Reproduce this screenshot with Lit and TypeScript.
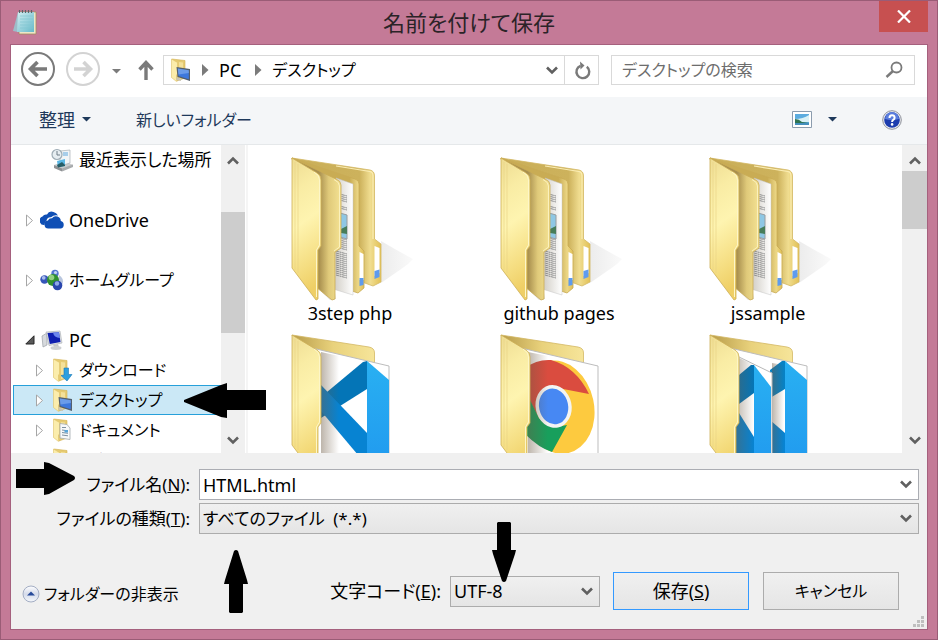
import { LitElement, html, css, svg } from "lit";
import { customElement, property } from "lit/decorators.js";
import { classMap } from "lit/directives/class-map.js";
import { styleMap } from "lit/directives/style-map.js";

const textFont = css`"Noto Sans", "Noto Sans CJK JP", sans-serif`;

/* ---------- small icons ---------- */

const chevron = (up = false) => html`<svg width="12" height="9" viewBox="0 0 12 9" aria-hidden="true">
  <path d=${up ? "M1 7.5 L6 2.5 L11 7.5" : "M1 1.5 L6 6.5 L11 1.5"} fill="none" stroke="#606060" stroke-width="2.6" />
</svg>`;

const caret = (color: string) => html`<svg width="9" height="5" viewBox="0 0 9 5" aria-hidden="true">
  <path d="M0 0H9L4.500 4.500Z" fill=${color} />
</svg>`;

const crumbArrow = html`<svg width="7" height="12" viewBox="0 0 7 12" aria-hidden="true">
  <path d="M0 0L6.500 6L0 12Z" fill="#7b7b7b" />
</svg>`;

const smallFolder = svg`
  <path d="M4 1L17 2.500V20L9 23Z" fill="#e6cb72" stroke="#d3b252" stroke-width=".6" />
  <path d="M11 4L15 4.500V20L11 21Z" fill="#f4e19a" />
  <path d="M3.500 1L9.500 4.500V16L8.500 17V23.500L3.500 19.500Z" fill="#fbedac" stroke="#dfc268" stroke-width=".6" />`;

const monitor = svg`
  <path d="M8.500 9L22 11V23L9.500 19Z" fill="#55606d" />
  <path d="M9.800 10.500L20.800 12.200V21.300L10.500 18Z" fill="#3d78dd" />
  <path d="M9.800 10.500L20.800 12.200V15L10.500 16.500Z" fill="#8ab4f2" opacity=".6" />
  <path d="M8.500 19L13 21V23L8.500 22Z" fill="#c9c4b4" />`;

const icons: Record<string, unknown> = {
  recent: svg`
    <path d="M4 17L15 13L23 17L12 23Z" fill="#c9cbcd" /><path d="M4 17L12 20.500V23.500L4 20Z" fill="#8e9194" />
    <path d="M12 20.500L23 16.500V19L12 23.500Z" fill="#a8abad" />
    <path d="M10 3L20 2V15L10 18Z" fill="#f2f5f7" stroke="#a9b0b5" stroke-width=".7" />
    <path d="M13 5H18M13 7H18" stroke="#5fa7dd" stroke-width="1.200" />
    <path d="M7 13L15 11V18L8 19Z" fill="#5ab7e4" /><path d="M7 17L12 14L15 17V18L8 19.500Z" fill="#275d66" />
    <circle cx="7" cy="6.500" r="5" fill="#e6edf1" stroke="#9eacb5" stroke-width="1.200" />
    <path d="M7 3V7H10" fill="none" stroke="#6f7d87" />`,
  cloud: svg`
    <path d="M4.500 17A4.400 4.400 0 0 1 2.500 8.500Q4 6 7 6.500Q9 2.500 13.500 4Q16.500 4.500 18 7.500Q14 6.500 11 9.300Q7 9 6.500 12.800Q4.500 14 4.500 17Z" fill="#0f4fb5" />
    <path d="M9 20.500A4 4 0 0 1 8 12.500Q9 10 12 10.300Q14 7.300 17.500 8.500Q20.800 9.500 20.800 13A3.900 3.900 0 0 1 21 20.500Z" fill="#0f4fb5" />`,
  homegroup: svg`
    <circle cx="15" cy="5.500" r="3.700" fill="#5375cf" /><circle cx="15.500" cy="4.500" r="1.600" fill="#c5d5f6" />
    <circle cx="4.500" cy="11.500" r="4.200" fill="#3656b9" /><circle cx="3.700" cy="9.800" r="1.900" fill="#a9bcec" />
    <path d="M19 7Q25 11 22 17L18 15Z" fill="#b9c6de" />
    <circle cx="13" cy="12" r="6" fill="#31902f" /><circle cx="11.500" cy="9.500" r="2.800" fill="#93d080" />
    <circle cx="17.500" cy="17.500" r="4.800" fill="#2946ad" /><circle cx="17" cy="15.500" r="2.200" fill="#8fa8e8" />`,
  pc: svg`
    <path d="M2 8L7 5V17L3 19Z" fill="#d7dadd" stroke="#9ba0a6" stroke-width=".7" />
    <path d="M6 4L20 3L22 15L9 17.500Z" fill="#dfe2e5" stroke="#a4a9ae" stroke-width=".6" />
    <path d="M7.500 5L19 4.200L20.500 14L9.800 16Z" fill="#0f1fb0" /><path d="M13 4.600L19 4.200L20 10Q14 10 13 4.600Z" fill="#6c87ee" />
    <path d="M13 17L18 16L19 19L15 20Z" fill="#c3c7ca" /><ellipse cx="16" cy="20" rx="5.500" ry="1.900" fill="#cdd0d3" />`,
  downloads: svg`${smallFolder}<path d="M14 10H18.500V16.500H22L17 23L11 17.500L14 17Z" fill="#2b9fe0" stroke="#1877b5" stroke-width=".6" />`,
  desktop: svg`${smallFolder}${monitor}`,
  documents: svg`${smallFolder}
    <path d="M10 5.500L17 6.500L20 10V21.500L10 20Z" fill="#f6f8fa" stroke="#a3a9ae" stroke-width=".8" />
    <path d="M12 9.500H16M12 12L18 12.800M12 14.500L18 15.300M12 17L18 17.800" stroke="#6f8396" stroke-width=".9" />
    <path d="M14.500 12H18V14.500H14.500Z" fill="#56a5da" />`,
  pictures: svg`${smallFolder}<path d="M9 12L20 10V20L9 19Z" fill="#6db4e2" />`,
};

const icon = (name: string) => html`<svg class="icon" width="24" height="24" viewBox="0 0 24 24" aria-hidden="true">${icons[name]}</svg>`;

/* ---------- scroll bar ---------- */

@customElement("scroll-rail")
class ScrollRail extends LitElement {
  @property({ type: Number }) before = 0;
  @property({ type: Number }) size = 1;
  @property({ type: Number }) after = 0;

  static styles = css`
    :host { display: flex; flex-direction: column; width: 24px; background: #f0f0f0; }
    button { height: 26px; padding: 4px 0 0; border: 0; background: none; display: grid; place-items: center; }
    button:last-child { padding: 0; }
    .track { flex: 1; display: flex; flex-direction: column; }
    .thumb { background: #cdcdcd; }
  `;

  render() {
    return html`
      <button aria-label="上へスクロール">${chevron(true)}</button>
      <div class="track">
        <div style=${styleMap({ flexGrow: String(this.before) })}></div>
        <div class="thumb" style=${styleMap({ flexGrow: String(this.size) })}></div>
        <div style=${styleMap({ flexGrow: String(this.after) })}></div>
      </div>
      <button aria-label="下へスクロール">${chevron()}</button>`;
  }
}

/* ---------- folder thumbnails ---------- */

type Kind = "docs" | "code" | "chrome" | "codes";

@customElement("folder-art")
class FolderArt extends LitElement {
  @property() kind: Kind = "docs";

  static styles = css`
    :host, svg { display: block; }
  `;

  private docs() {
    const lines = [];
    for (let y = 38; y < 122; y += 2) {
      if ((y > 44 && y < 50) || (y > 53 && y < 82) || (y > 92 && y < 96)) continue;
      lines.push(svg`<path d=${`M50 ${y}L61 ${y + 3}`} stroke="#77787a" stroke-width=".8" stroke-dasharray="3 .6 2 .5" />`);
    }
    return svg`
      <path d="M95 86Q112 96 127 104L122 109L118 112L95 128Z" fill="url(#shade)" />
      <path d="M26 128L44 145L50 144L49 138Z" fill="#e6e2dc" />
      <path d="M6 3L84 15Q88.500 16 88.500 21V84L95 89V127L87 131L76 127L30 90Z" fill="url(#back)" stroke="#d3b863" stroke-width=".8" />
      <path d="M50 11L84 16.500Q87 17 87 21V84" fill="none" stroke="#fbedb4" stroke-width="1.200" />
      <path d="M88.500 91L93.500 93V118L88.500 121Z" fill="#fff" /><path d="M88.500 116L93.500 114.500V122L88.500 124Z" fill="#5e9bee" />
      <path d="M6 3L69 24Q73 25 73 29V91L78 96V133L72 138L66 136L30 90Z" fill="url(#third)" stroke="#c9ab54" stroke-width=".8" />
      <path d="M73.500 97L77.500 99V125H73.500Z" fill="#fff" /><path d="M73.500 123H77.500V130L73.500 131Z" fill="#5e9bee" />
      <path d="M50 23L67 29V140L47 134Z" fill="url(#paper)" stroke="#c4c4c4" stroke-width=".5" />
      ${lines}
      <path d="M54 58L61 60V84L54 82Z" fill="#8ec7e4" stroke="#969da1" stroke-width="1" /><path d="M55 74L61 71V79L55 78Z" fill="#477d59" />
      <path d="M6 3L50 24Q55 26 55 30V93L49 97V144L46 145L30 132L25 80Z" fill="url(#middle)" stroke="#c9ab54" stroke-width=".8" />
      <path d="M48 24.500Q53.500 27 53.500 31V92L48 96" fill="none" stroke="#fbf1bd" stroke-width="1" />`;
  }

  private code() {
    return svg`
      <path d="M77 30L81 29V57L35 86V65Z" fill="#0475b7" />
      <path d="M35 53L81 101V123H72L35 79Z" fill="#0783d2" />
      <path d="M81 29L103 48V130H81Z" fill="url(#blade)" />
      <path d="M35 20L53 24V130H35Z" fill="url(#inner)" />`;
  }

  private chrome() {
    return svg`
      <g transform="rotate(-12 64 75)">
        <ellipse cx="63" cy="75" rx="36" ry="47" fill="#fdca3f" />
      </g>
      <path d="M30 36Q42 27 56 28Q81 35 94 62L63 56L43 84L30 60Z" fill="#da4c3f" />
      <path d="M30 58L44 86Q53 98 72 93L57 120Q44 116 30 102Z" fill="#189f5c" />
      <ellipse cx="58.500" cy="74.500" rx="18" ry="21.500" fill="#f4f4f2" transform="rotate(-12 58 74)" />
      <ellipse cx="58.500" cy="74.500" rx="14.500" ry="18" fill="#4788f3" transform="rotate(-12 58 74)" />
      <path d="M33 20L53 24V130H33Z" fill="url(#inner)" />`;
  }

  private codes() {
    return svg`
      <path d="M66 38L78 29H81V57L66 66Z" fill="#0781c4" />
      <path d="M66 88L81 101V130H66Z" fill="#0783d2" />
      <path d="M81 29L103 48V130H81Z" fill="url(#blade)" />
      <path d="M68 31L80 33V130H68Z" fill="url(#inner)" />
      <path d="M33 24L68 41V130H33Z" fill="#fff" stroke="#b8b8b8" />
      <path d="M35 43L47 33H50V61L35 72Z" fill="#0475b7" />
      <path d="M30 77L35 81L50 105V130H30Z" fill="#0783d2" />
      <path d="M50 33L67 55V130H50Z" fill="url(#blade)" />
      <path d="M33 25L50 33V130H31Z" fill="url(#inner)" />`;
  }

  private wide() {
    return svg`
      <path d="M6 3L83 15Q88.500 16 88.500 21V60H30Z" fill="url(#lid)" stroke="#d3b863" stroke-width=".8" />
      <path d="M26 16L103 34V140H26Z" fill="#fff" stroke="#bdbdbd" />
      ${this.kind === "code" ? this.code() : this.kind === "chrome" ? this.chrome() : this.codes()}`;
  }

  render() {
    return html`<svg width="128" height="148" viewBox="0 0 128 148" aria-hidden="true">
      <defs>
        <linearGradient id="front" x1="0" y1="0" x2=".15" y2="1">
          <stop offset="0" stop-color="#eedc92" /><stop offset=".25" stop-color="#f9eca4" /><stop offset=".5" stop-color="#fef4b0" /><stop offset=".85" stop-color="#f4db7c" /><stop offset="1" stop-color="#efcf66" />
        </linearGradient>
        <linearGradient id="middle" x1="0" y1="0" x2="1" y2="0">
          <stop offset=".55" stop-color="#a88f4e" /><stop offset=".75" stop-color="#e0ca7a" /><stop offset="1" stop-color="#f4e293" />
        </linearGradient>
        <linearGradient id="third" x1="0" y1="0" x2="1" y2="0">
          <stop offset=".8" stop-color="#c9ac54" /><stop offset=".92" stop-color="#ecd786" /><stop offset="1" stop-color="#e0bf55" />
        </linearGradient>
        <linearGradient id="back" x1="0" y1="0" x2="1" y2="0">
          <stop offset="0" stop-color="#c9ae58" /><stop offset=".76" stop-color="#cdb25c" /><stop offset=".88" stop-color="#f0dd90" /><stop offset="1" stop-color="#e2c155" />
        </linearGradient>
        <linearGradient id="lid"><stop offset="0" stop-color="#b79b49" /><stop offset=".5" stop-color="#e9d27c" /><stop offset="1" stop-color="#f6e59a" /></linearGradient>
        <linearGradient id="paper"><stop offset="0" stop-color="#cfcbc3" /><stop offset="1" stop-color="#fff" /></linearGradient>
        <linearGradient id="blade" x1="0" y1="0" x2="0" y2="1"><stop offset="0" stop-color="#29b0f2" /><stop offset="1" stop-color="#219bef" /></linearGradient>
        <linearGradient id="inner"><stop offset="0" stop-color="#6d5b45" stop-opacity=".45" /><stop offset="1" stop-color="#6d5b45" stop-opacity="0" /></linearGradient>
        <linearGradient id="shade"><stop offset="0" stop-color="#ececec" /><stop offset="1" stop-color="#fafafa" /></linearGradient>
      </defs>
      ${this.kind === "docs" ? this.docs() : this.wide()}
      <path d="M6 3L31 18Q35 20 35 25V91L32 95V144L30 145L6 113Z" fill="url(#front)" stroke="#cdae55" stroke-width=".8" />
      <path d="M9 7V115M12 9V118" stroke="#e8d283" stroke-width=".6" />
      <path d="M28 17Q33.500 20 33.500 25V90L30.500 95V142" fill="none" stroke="#fdf6c8" stroke-width="1" />
    </svg>`;
  }
}

/* ---------- dialog ---------- */

interface TreeRow { label: string; icon: string; level: number; size?: string; state?: "closed" | "open"; selected?: boolean; spaced?: boolean }

const tree: TreeRow[] = [
  { label: "最近表示した場所", icon: "recent", level: 2, size: "mixed", spaced: true },
  { label: "OneDrive", icon: "cloud", level: 1, state: "closed", spaced: true },
  { label: "ホームグループ", icon: "homegroup", level: 1, size: "kana", state: "closed", spaced: true },
  { label: "PC", icon: "pc", level: 1, state: "open" },
  { label: "ダウンロード", icon: "downloads", level: 2, size: "kana", state: "closed" },
  { label: "デスクトップ", icon: "desktop", level: 2, size: "kana", state: "closed", selected: true },
  { label: "ドキュメント", icon: "documents", level: 2, size: "kana", state: "closed" },
  { label: "ピクチャ", icon: "pictures", level: 2, size: "kana", state: "closed" },
];

const files: { name?: string; kind: Kind }[] = [
  { name: "3step php", kind: "docs" },
  { name: "github pages", kind: "docs" },
  { name: "jssample", kind: "docs" },
  { kind: "code" },
  { kind: "chrome" },
  { kind: "codes" },
];

@customElement("app-root")
class AppRoot extends LitElement {
  static styles = css`
    :host { display: block; font: 18px/24px ${textFont}; font-feature-settings: "palt"; color: #000; }
    * { box-sizing: border-box; }
    button, input, select { font: inherit; font-feature-settings: inherit; color: inherit; margin: 0; }
    button { padding: 0; border: 0; background: none; white-space: nowrap; }
    svg { display: block; flex: none; }
    .kana { font-size: 16px; }
    .mixed { font-size: 17px; }
    .window { display: flex; flex-direction: column; height: 100vh; min-height: 520px; padding: 0 9px 9px; border: 1px solid #9a5c76; background: #c47a97; }
    .titlebar { display: grid; grid-template-columns: 1fr auto 1fr; height: 43px; flex: none; }
    .app-icon { margin: 9px 3px; }
    h1 { margin: 0; font-size: 22px; line-height: 43px; font-weight: 400; color: #2b2327; }
    .close { justify-self: end; width: 49px; height: 31px; background: #c75050; display: grid; place-items: center; }
    .client { flex: 1; min-height: 0; display: flex; flex-direction: column; border: 1px solid #a5607d; background: #fff; }

    .nav { display: flex; align-items: center; height: 52px; flex: none; padding: 0 12px 2px 10px; }
    .round { margin: 0 11px 2px 0; }
    .history { margin: 2px 17px 0 1px; }
    .up { margin-right: 9px; }
    .address { flex: 436 1 436px; height: 30px; display: flex; align-items: center; border: 1px solid #d9d9d9; min-width: 0; }
    .address .icon { margin: 0 10px 0 4px; }
    .address .crumb { margin: 0 14px 0 10px; }
    .address .drop { margin-left: auto; padding: 0 6px; }
    .refresh { width: 34px; height: 28px; display: grid; place-items: center; border-left: 1px solid #d9d9d9; }
    .search { flex: 304 1 304px; height: 30px; margin-left: 12px; display: flex; align-items: center; border: 1px solid #d9d9d9; padding: 0 11px 0 10px; min-width: 0; }
    .search input { flex: 1; min-width: 0; border: 0; padding: 0; background: none; outline: 0; font-size: 16px; }
    .search input::placeholder { color: #6d6d6d; opacity: 1; }

    .toolbar { display: flex; align-items: center; height: 48px; flex: none; padding: 0 25px 2px 28px; background: #f4f6f8; border-bottom: 1px solid #e5e8ea; color: #1e395b; }
    .toolbar button { display: flex; align-items: center; gap: 7px; }
    .organize { margin-right: 45px; }
    .toolbar .view { margin: 0 45px 0 auto; gap: 16px; }

    .body { position: relative; flex: 1; min-height: 0; display: flex; }
    .tree { width: 210px; overflow: hidden; flex: none; }
    .row { display: flex; align-items: center; width: 208px; height: 30px; margin-left: 2px; padding-left: 10px; border: 1px solid transparent; border-right: 0; text-align: left; }
    .row.nested { padding-left: 20px; }
    .row.spaced { margin-bottom: 30px; }
    .row.selected { background: #cbe8f6; border-color: #26a0da; }
    .slot { width: 16px; padding-left: 1px; }
    .row .icon { margin-right: 5px; }
    .split { width: 3px; background: #f5f5f5; border-left: 1px solid #fff; }
    .files { flex: 1; min-width: 0; overflow: hidden; display: grid; grid-template-columns: repeat(auto-fill, 204px); grid-auto-rows: 168px; gap: 9px 5px; padding-top: 10px; }
    .file { display: flex; flex-direction: column; align-items: center; height: 168px; line-height: 20px; }
    .files + scroll-rail { width: 25px; }

    .form { position: relative; flex: none; padding: 16px 8px 19px 11px; background: #f0f0f0; }
    .fields { display: grid; grid-template-columns: 168px 1fr; gap: 3px 9px; align-items: center; }
    .fields label { text-align: right; white-space: nowrap; }
    .combo { position: relative; }
    .combo input, .combo select { display: block; width: 100%; height: 31px; padding: 0 3px; border: 1px solid #abadb3; background: #fff; border-radius: 0; outline: 0; appearance: none; }
    .combo select { background: linear-gradient(#f0f0f0, #e5e5e5); border-color: #acacac; }
    .combo .drop { position: absolute; right: 7px; top: 11px; pointer-events: none; }
    .actions { display: flex; align-items: center; margin-top: 38px; padding-right: 20px; }
    .hide { display: flex; align-items: center; gap: 4px; margin: 6px auto 0 0; }
    .encoding { width: 150px; margin: 0 13px 0 9px; }
    .push { width: 136px; height: 38px; border: 1px solid #acacac; background: linear-gradient(#f0f0f0, #e5e5e5); }
    .push.primary { border-color: #3399ff; margin-right: 14px; }
    .grip { position: absolute; right: 3px; bottom: 2px; }

    .mark { position: absolute; }
    .mark-desktop { left: 172px; top: 238px; }
    .mark-name { left: 5px; top: 9px; }
    .mark-type { left: 213px; top: 97px; }
    .mark-encoding { left: 481px; top: 69px; }
  `;

  private treeRow(r: TreeRow) {
    return html`<button class=${classMap({ row: true, nested: r.level === 2, spaced: !!r.spaced, selected: !!r.selected })}>
      <span class="slot">${r.state === "open"
        ? html`<svg width="10" height="10" viewBox="0 0 10 10"><path d="M9 .800V9H.800Z" fill="#595959" stroke="#262626" /></svg>`
        : r.state === "closed"
          ? html`<svg width="9" height="13" viewBox="0 0 9 13"><path d="M1.500 1L7.500 6.500L1.500 12Z" fill="#fff" stroke="#a6a6a6" /></svg>`
          : ""}</span>
      ${icon(r.icon)}<span class=${r.size ?? ""}>${r.label}</span>
    </button>`;
  }

  render() {
    return html`<div class="window">
      <header class="titlebar">
        <svg class="app-icon" width="24" height="26" viewBox="0 0 24 26" aria-hidden="true">
          <defs><linearGradient id="pad" x1="0" y1="0" x2="1" y2="1"><stop offset="0" stop-color="#d3eff2" /><stop offset="1" stop-color="#66b9c9" /></linearGradient></defs>
          <path d="M6 2H23V24H6Z" fill="#eee7c7" stroke="#a28e5e" stroke-width=".8" />
          <path d="M5 2L0 21L5 22Z" fill="#9dbdc9" />
          <path d="M5 2H21V22H4Z" fill="url(#pad)" />
          <path d="M7 6H20M7 9H20M7 12H20M7 15H20M7 18H20" stroke="#83c5d1" stroke-width=".7" />
          <path d="M6.500 0V3M9.500 0V3M12.500 0V3M15.500 0V3M18.500 0V3" stroke="#5b646a" stroke-width="1.200" />
        </svg>
        <h1>名前を付けて保存</h1>
        <button class="close" aria-label="閉じる"><svg width="14" height="13" viewBox="0 0 14 13"><path d="M1 .500L13 12.500M13 .500L1 12.500" stroke="#fff" stroke-width="2.200" /></svg></button>
      </header>
      <main class="client">
        <nav class="nav">
          <button class="round" aria-label="戻る"><svg width="34" height="34" viewBox="0 0 34 34"><circle cx="17" cy="17" r="16" fill="none" stroke="#7a7a7a" stroke-width="2" /><path d="M26 17H10M16.500 10L9.500 17L16.500 24" fill="none" stroke="#7a7a7a" stroke-width="3.600" /></svg></button>
          <button class="round" aria-label="進む"><svg width="34" height="34" viewBox="0 0 34 34"><circle cx="17" cy="17" r="16" fill="none" stroke="#d3d3d3" stroke-width="2" /><path d="M8 17H24M17.500 10L24.500 17L17.500 24" fill="none" stroke="#d3d3d3" stroke-width="3.600" /></svg></button>
          <button class="history" aria-label="履歴">${caret("#7b7b7b")}</button>
          <button class="up" aria-label="上へ"><svg width="16" height="20" viewBox="0 0 16 20"><path d="M8 20V3M1.500 9.500L8 2.500L14.500 9.500" fill="none" stroke="#7a7a7a" stroke-width="3.400" /></svg></button>
          <div class="address">
            ${icon("desktop")}${crumbArrow}<span class="crumb">PC</span>${crumbArrow}<span class="crumb kana">デスクトップ</span>
            <button class="drop" aria-label="以前の場所">${chevron()}</button>
            <button class="refresh" aria-label="最新の情報に更新"><svg width="18" height="20" viewBox="0 0 18 20"><path d="M13.800 5.700A6.400 6.400 0 1 1 7.500 4.800" fill="none" stroke="#7a7a7a" stroke-width="2.400" transform="translate(0 1)" /><path d="M7 1.500L11.500 5.500L7.500 9.500Z" fill="#7a7a7a" /></svg></button>
          </div>
          <div class="search">
            <input type="search" aria-label="検索" placeholder="デスクトップの検索" />
            <svg width="18" height="18" viewBox="0 0 18 18" aria-hidden="true"><circle cx="11.500" cy="6.500" r="5" fill="none" stroke="#7a7a7a" stroke-width="1.800" /><path d="M8 10L1.500 16" stroke="#7a7a7a" stroke-width="2.400" /></svg>
          </div>
        </nav>
        <div class="toolbar">
          <button class="organize">整理 ${caret("#1e395b")}</button>
          <button class="kana">新しいフォルダー</button>
          <button class="view" aria-label="表示方法の変更">
            <svg width="20" height="17" viewBox="0 0 20 17"><path d="M.500 .500H19.500V16.500H.500Z" fill="#fff" stroke="#8b9cae" /><path d="M3 3H17V14H3Z" fill="#5cacdf" /><path d="M3 8Q11 8 17 4V11H3Z" fill="#d9f1f6" /><path d="M3 8Q7 8 10 11L17 12V14H3Z" fill="#2f7452" /><path d="M3 12H17V14H3Z" fill="#438fbd" /></svg>
            ${caret("#1e395b")}
          </button>
          <button aria-label="ヘルプ">
            <svg width="20" height="20" viewBox="0 0 20 20"><circle cx="10" cy="10" r="9.300" fill="#f0f1f4" stroke="#8c8f99" /><circle cx="10" cy="10" r="7.800" fill="#1c3cae" /><path d="M3 9A7 7 0 0 1 17 9Q10 11 3 9Z" fill="#5a7ddd" /><path d="M7.500 8Q7.500 5.300 10 5.300T12.600 7.700Q12.600 9 11.200 9.800Q10.100 10.400 10.100 12" fill="none" stroke="#fff" stroke-width="2" /><circle cx="10.100" cy="14.400" r="1.300" fill="#fff" /></svg>
          </button>
        </div>
        <section class="body">
          <div class="tree">${tree.map((r) => this.treeRow(r))}</div>
          <scroll-rail .before=${41} .size=${121} .after=${94}></scroll-rail>
          <div class="split"></div>
          <div class="files">${files.map((f) => html`<div class="file"><folder-art .kind=${f.kind}></folder-art>${f.name ? html`<span>${f.name}</span>` : ""}</div>`)}</div>
          <scroll-rail .before=${0} .size=${58} .after=${198}></scroll-rail>
          <svg class="mark mark-desktop" width="84" height="36" viewBox="0 0 84 36" aria-hidden="true"><path d="M1 17L38 2L44 0V7H83V27H44V35L38 34L1 19Z" /></svg>
        </section>
        <form class="form" @submit=${(e: Event) => e.preventDefault()}>
          <div class="fields">
            <label for="name" class="mixed">ファイル名(<u>N</u>):</label>
            <div class="combo"><input id="name" value="HTML.html" /><span class="drop">${chevron()}</span></div>
            <label for="type" class="mixed">ファイルの種類(<u>T</u>):</label>
            <div class="combo mixed"><select id="type"><option>すべてのファイル&ensp;(*.*)</option></select><span class="drop">${chevron()}</span></div>
          </div>
          <div class="actions">
            <button type="button" class="hide kana">
              <svg width="18" height="18" viewBox="0 0 18 18" aria-hidden="true"><defs><linearGradient id="orb" x1="0" y1="0" x2="0" y2="1"><stop offset="0" stop-color="#fff" /><stop offset=".5" stop-color="#d5dbea" /><stop offset="1" stop-color="#f5f8fc" /></linearGradient></defs><circle cx="9" cy="9" r="8" fill="url(#orb)" stroke="#a4aec4" /><path d="M5 10.500L9 6.500L13 10.500Z" fill="#274a9a" /></svg>
              フォルダーの非表示
            </button>
            <label for="encoding">文字コード(<u>E</u>):</label>
            <div class="combo encoding"><select id="encoding"><option>UTF-8</option></select><span class="drop">${chevron()}</span></div>
            <button class="push primary">保存(<u>S</u>)</button>
            <button type="button" class="push kana">キャンセル</button>
          </div>
          <svg class="grip" width="11" height="11" viewBox="0 0 11 11" aria-hidden="true"><path d="M8 0h3v3h-3zM4 4h3v3h-3zM8 4h3v3h-3zM0 8h3v3h-3zM4 8h3v3h-3zM8 8h3v3h-3z" fill="#bfbfbf" /></svg>
          <svg class="mark mark-name" width="59" height="34" viewBox="0 0 59 34" aria-hidden="true"><path d="M0 7H28V0L33 1L58 14Q60 16 58 18L33 32L28 33V26H0Z" /></svg>
          <svg class="mark mark-type" width="24" height="64" viewBox="0 0 24 64" aria-hidden="true"><path d="M10 1Q12 -1 14 1L23 30L24 34H19V62L18 63H6L5 62V34H0L1 30Z" /></svg>
          <svg class="mark mark-encoding" width="24" height="60" viewBox="0 0 24 60" aria-hidden="true"><path d="M6 0H18L19 1V28H24L23 32L14 59Q12 61 10 59L1 32L0 28H5V1Z" /></svg>
        </form>
      </main>
    </div>`;
  }
}
